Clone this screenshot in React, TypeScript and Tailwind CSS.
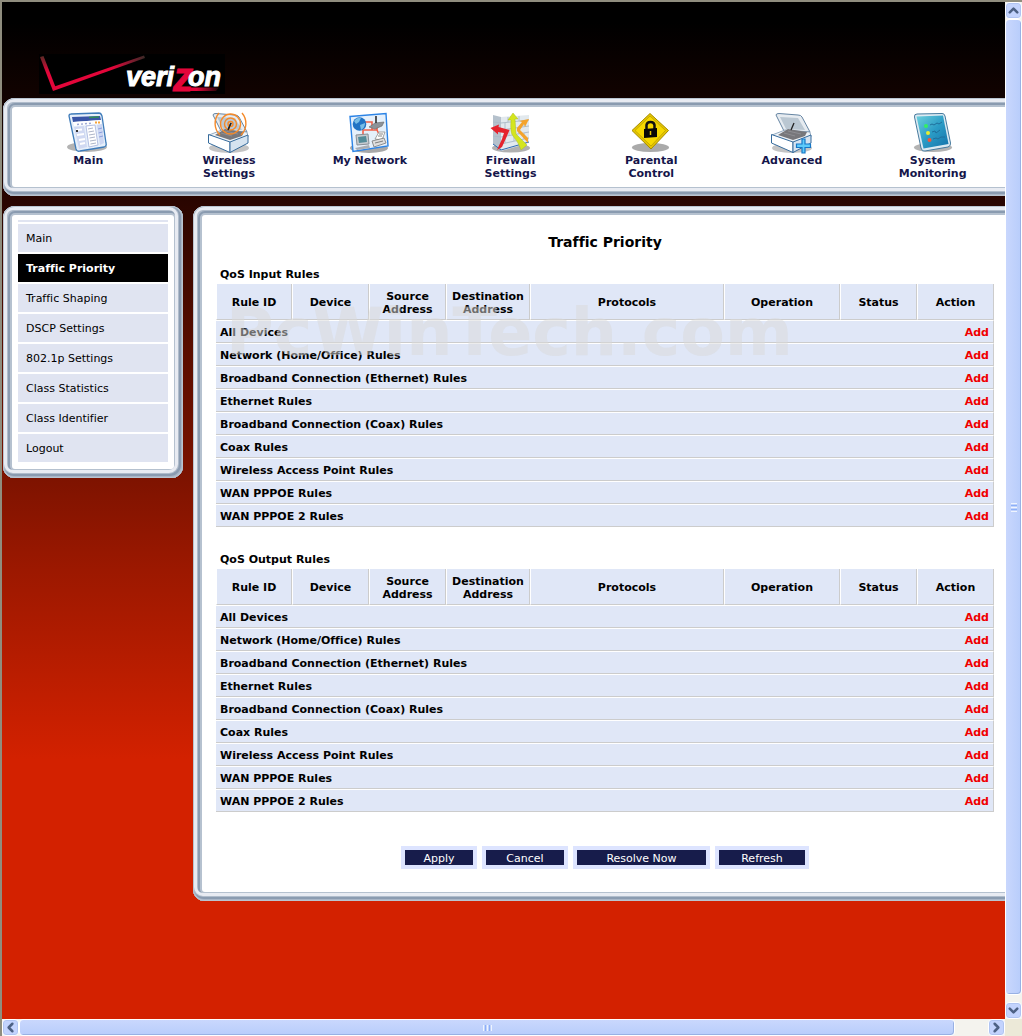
import type { ReactNode } from 'react'
import { ChevronDown, ChevronLeft, ChevronRight, ChevronUp } from 'lucide-react'
import clsx from 'clsx'

const RULES = [
  'All Devices',
  'Network (Home/Office) Rules',
  'Broadband Connection (Ethernet) Rules',
  'Ethernet Rules',
  'Broadband Connection (Coax) Rules',
  'Coax Rules',
  'Wireless Access Point Rules',
  'WAN PPPOE Rules',
  'WAN PPPOE 2 Rules',
]

const MENU = [
  'Main',
  'Traffic Priority',
  'Traffic Shaping',
  'DSCP Settings',
  '802.1p Settings',
  'Class Statistics',
  'Class Identifier',
  'Logout',
]

const COLUMNS = [
  { label: 'Rule ID', width: 'w-[76px]' },
  { label: 'Device', width: 'w-[77px]' },
  { label: 'Source Address', width: 'w-[77px]' },
  { label: 'Destination Address', width: 'w-[84px]' },
  { label: 'Protocols', width: '' },
  { label: 'Operation', width: 'w-[116px]' },
  { label: 'Status', width: 'w-[77px]' },
  { label: 'Action', width: 'w-[77px]' },
]

function Logo() {
  return (
    <svg width="186" height="40" viewBox="0 0 186 40" role="img" aria-label="verizon" className="block">
      <defs>
        <linearGradient id="checkShort" x1="0" y1="0" x2="0" y2="1">
          <stop offset="0" stopColor="#5a2a25" />
          <stop offset="0.45" stopColor="#e3063a" />
        </linearGradient>
        <linearGradient id="checkLong" x1="0" y1="0" x2="1" y2="0">
          <stop offset="0" stopColor="#e3063a" />
          <stop offset="0.65" stopColor="#e3063a" />
          <stop offset="1" stopColor="#3a2a26" />
        </linearGradient>
        <linearGradient id="zTail" x1="0" y1="0" x2="1" y2="0">
          <stop offset="0" stopColor="#e3063a" />
          <stop offset="0.5" stopColor="#e3063a" />
          <stop offset="1" stopColor="#1a0606" />
        </linearGradient>
      </defs>
      <rect width="186" height="40" fill="#000" />
      <path d="M1 3L4.500 2L16.500 33L14 37Z" fill="url(#checkShort)" />
      <path d="M14 37L15.500 32.500L105 1.500L106 4Z" fill="url(#checkLong)" />
      <path d="M138 33.500H180L177 37H135Z" fill="url(#zTail)" />
      <text fontFamily="'Liberation Sans', Arial, sans-serif" fontWeight="700" fontStyle="italic" fontSize="27" fill="#fff" stroke="#fff" strokeWidth="1">
        <tspan x="87" y="32">veri</tspan>
        <tspan x="134" y="37" fontSize="40" fill="#e3063a" stroke="#e3063a">z</tspan>
        <tspan x="149" y="32">on</tspan>
      </text>
    </svg>
  )
}

function Icon({ children }: { children: ReactNode }) {
  return (
    <svg width="42" height="42" viewBox="0 0 42 42" aria-hidden="true" className="block">
      {children}
    </svg>
  )
}

function MainIcon() {
  return (
    <Icon>
      <ellipse cx="20" cy="35" rx="20" ry="5" fill="#b3b3b3" />
      <path d="M4 2Q2 2 2 4L9 37Q10 40 13 39L37 35Q40 34 39 31L35 4Q34 1 32 1Z" fill="#e6effa" stroke="#3f7cba" strokeWidth="1.300" />
      <path d="M5 5L33 4L34 8L6 10Z" fill="#3a55a6" />
      <path d="M6 10L34 8L34.500 12L7 14Z" fill="#fff" />
      <path d="M22 5.500L32 5" stroke="#2f8c58" strokeWidth="1.500" />
      <path d="M10 12.500L26 11" stroke="#9daad6" strokeWidth="1.500" strokeDasharray="2 2" />
      <path d="M28 10.500H34" stroke="#f5a43a" strokeWidth="2" strokeDasharray="2 1" />
      <path d="M7 15L17 14L20 35L12 37Z" fill="#d0d9f2" />
      <path d="M19 14L28 13L31 33L22 35Z" fill="#fff" stroke="#a4b2dc" strokeWidth="0.800" />
      <path d="M30 13L35 12L37 31L33 33Z" fill="#ccd6f2" />
      <path d="M9 18L15 17.500M10 23L17 22M12 28L18 27M13 32L18 31" stroke="#fff" strokeWidth="2" />
      <path d="M9 19H11" stroke="#333" strokeWidth="2" />
      <path d="M21 17L26 16M21.500 20L27 19M22 23L28 22M22.500 26L28 25M23 29L29 28M23.500 32L29 31" stroke="#adb5c8" />
      <path d="M31 17L35 16M31.500 21L35.500 20M32 25L36 24" stroke="#8b9fdd" />
    </Icon>
  )
}

function RouterBox() {
  return (
    <>
      <ellipse cx="21" cy="36" rx="20" ry="5" fill="#c4c4c4" />
      <path d="M5 3Q5 1.500 8 1.500L27 3Q30 3 31 5L39 20L13 19Z" fill="#e6ebf0" stroke="#6685a3" />
      <path d="M9 5L27 6L34 18L15 17Z" fill="#bac7d2" />
      <path d="M1 23L14 18L39 20L40 25L22 31Z" fill="#eef2f6" stroke="#7c97b1" strokeWidth="0.800" />
      <path d="M7 23L17 17L36 20L34 24L22 28Z" fill="#77777b" />
      <path d="M13 21L24 24M17 19L30 22" stroke="#8d8d92" />
      <path d="M0.500 22.500L22 30V40.500L0.500 31Z" fill="#fff" stroke="#366b9c" />
      <path d="M22 30L40 23V31L22 40.500Z" fill="#d5e3f0" stroke="#366b9c" />
      <path d="M20 18L23 11" stroke="#222" strokeWidth="1.300" />
    </>
  )
}

function WirelessIcon() {
  return (
    <Icon>
      <RouterBox />
      <g fill="none" stroke="#f58a2a" strokeWidth="1.400">
        <circle cx="22.500" cy="12" r="2.500" />
        <circle cx="22.500" cy="12" r="6" />
        <circle cx="22.500" cy="12" r="10" />
        <path d="M11 1A16 16 0 0 0 12 23M34 1A16 16 0 0 1 33 23" />
      </g>
      <path d="M20 18L23 11" stroke="#222" strokeWidth="1.500" />
    </Icon>
  )
}

function NetworkIcon() {
  return (
    <Icon>
      <ellipse cx="20" cy="36" rx="19" ry="5" fill="#a8a8a8" />
      <path d="M1 4.500L37 1.500L39 34L4 39.500Z" fill="#e5f0fb" stroke="#2c84e6" strokeWidth="1.400" />
      <path d="M16 10L23 10V18H14V23M28 13V18L31 24M23 18L28 18" fill="none" stroke="#f0604a" strokeWidth="1.600" />
      <circle cx="10.500" cy="12" r="6.800" fill="#2173c4" />
      <path d="M5 9Q8 5 12 6L10 10L7 12ZM11 13L16 11Q16 16 12 18Z" fill="#79bde6" />
      <path d="M20 15L26 11L35 10L33 14L26 17Z" fill="#8c9299" stroke="#666" strokeWidth="0.600" />
      <path d="M27 11V4" stroke="#222" strokeWidth="1.500" />
      <path d="M7 23L19 22L20 32L8 33Z" fill="#c7cbd0" stroke="#888f96" />
      <path d="M9 25L17 24L18 30L10 31Z" fill="#548c99" />
      <path d="M6 36L20 33L21 36L8 38Z" fill="#a9adb3" />
      <path d="M26 27L30 20L36 20L33 28Z" fill="#fff" stroke="#8d8d8d" strokeWidth="0.800" />
      <path d="M23 29L35 26L37 31L25 35Z" fill="#dedede" stroke="#777" strokeWidth="0.800" />
      <path d="M29 24H33M30 22H34M26 31L34 29" stroke="#666" strokeWidth="0.800" />
    </Icon>
  )
}

function FirewallIcon() {
  return (
    <Icon>
      <ellipse cx="21" cy="36" rx="19" ry="4.500" fill="#b0b0b0" />
      <path d="M3 3L11 5V39L3 32Z" fill="#b5c1cc" />
      <path d="M11 5L39 3V31L11 39Z" fill="#e2e9ee" />
      <path d="M11 11L39 8M11 18L39 14M11 25L39 20M11 32L39 26M18 5V10M29 4V9M15 11V17M24 10V16M34 9V14M19 17V24M29 16V22M15 25V31M24 23V29M34 21V27M3 10L11 11M3 17L11 18M3 24L11 25" stroke="#aab9c6" strokeWidth="0.900" />
      <path d="M3 32L11 38L39 30" fill="none" stroke="#2e6ab0" />
      <path d="M0.500 16L9 12.500L8.500 15L19.500 18L17 24L12 35L7 38L12 27L14 21L8 20V22.500Z" fill="#e5232d" />
      <path d="M23 1L28 7H25L26 22L37 33L31 38Q29 31 23 24Q20 21 21 8H18Z" fill="#d4e51d" stroke="#a9bd25" strokeWidth="0.500" />
      <path d="M39 7L35 15L34 12L30 18L38 26V31L27 19V16L32 10L29 9Z" fill="#f4a32c" />
    </Icon>
  )
}

function ParentalIcon() {
  return (
    <Icon>
      <ellipse cx="20.500" cy="35.500" rx="18.500" ry="4.500" fill="#aaa" />
      <path d="M20 1.500L38.500 18.500L21 37L2 18.500Z" fill="#e6c500" stroke="#a48c00" />
      <path d="M20 4L35.500 18.500L21 34L5 18.500Z" fill="#f6d800" stroke="#b39b00" strokeWidth="0.700" />
      <path d="M16.500 18V13Q17 10 20.500 10Q24 10 24.500 13V18" fill="none" stroke="#111" strokeWidth="2.500" />
      <path d="M14 17L27 16V25L14 26Z" fill="#080808" />
      <path d="M20.500 19V23" stroke="#e6c500" strokeWidth="1.500" />
    </Icon>
  )
}

function AdvancedIcon() {
  return (
    <Icon>
      <RouterBox />
      <path d="M31 27H34V32H39.500V35.500H34V41H31V35.500H25.500V32H31Z" fill="#5fcbfa" stroke="#1677c7" strokeWidth="1.200" />
    </Icon>
  )
}

function MonitoringIcon() {
  return (
    <Icon>
      <ellipse cx="21" cy="35.500" rx="19" ry="4.500" fill="#b3b3b3" />
      <defs>
        <linearGradient id="screen" x1="0" y1="0" x2="1" y2="1">
          <stop offset="0" stopColor="#6dd0dd" />
          <stop offset="0.500" stopColor="#2b9cc6" />
          <stop offset="1" stopColor="#1472aa" />
        </linearGradient>
      </defs>
      <path d="M5 2Q2 2 2.500 5L9 36Q10 40 13 39L36 35Q39 34 38.500 31L33 4Q32 1 30 1.500Z" fill="#dceaf2" stroke="#467a9e" />
      <path d="M4.500 4.500L31 3.500L36.500 32L11.500 36.500Z" fill="url(#screen)" />
      <circle cx="14" cy="14" r="2" fill="#35ef62" />
      <circle cx="16" cy="21" r="2" fill="#e6ef2e" />
      <circle cx="17.500" cy="28" r="2" fill="#f0583c" />
      <path d="M18 13L20 12L22 13L25 11L27 12L30 10M20 20L23 19L24 21L28 18M21 27L24 26L26 27L29 25L33 25" fill="none" stroke="#1f6f9c" />
    </Icon>
  )
}

const NAV = [
  { label: 'Main', icon: <MainIcon /> },
  { label: 'Wireless Settings', icon: <WirelessIcon /> },
  { label: 'My Network', icon: <NetworkIcon /> },
  { label: 'Firewall Settings', icon: <FirewallIcon /> },
  { label: 'Parental Control', icon: <ParentalIcon /> },
  { label: 'Advanced', icon: <AdvancedIcon /> },
  { label: 'System Monitoring', icon: <MonitoringIcon /> },
]

// Bevelled silver frame, lit from the top left
function Panel({ className, children }: { className?: string; children: ReactNode }) {
  return (
    <div
      className={clsx(
        'rounded-xl bg-white p-[9px] shadow-[inset_0_0_0_1px_#b9c4d0,inset_-1px_-1px_0_1px_#a9b5c6,inset_-2px_-2px_0_2px_#8a9bb0,inset_-2px_-2px_0_3px_#b0bccb,inset_-2px_-2px_0_6px_#e8ebf2,inset_0_0_0_5px_#b0bccb,inset_0_0_0_7px_#8a9bb0,inset_0_0_0_9px_#b5c1cf]',
        className,
      )}
    >
      {children}
    </div>
  )
}

function RuleTable({ title }: { title: string }) {
  return (
    <section>
      <h2 className="h-5 pl-1 leading-[22px] font-bold">{title}</h2>
      <table className="w-full table-fixed border-separate border-spacing-0 font-bold">
        <thead>
          <tr className="h-9">
            {COLUMNS.map(c => (
              <th
                key={c.label}
                className={clsx('border-r border-b border-l border-r-[#ccc] border-b-[#ccc] border-l-white bg-[#e0e7f7] p-0 pt-0.5 leading-[13px]', c.width)}
              >
                {c.label}
              </th>
            ))}
          </tr>
        </thead>
        <tbody>
          {RULES.map(rule => (
            <tr key={rule} className="h-[23px]">
              <td colSpan={7} className="border-t border-b border-t-white border-b-[#ccc] bg-[#e0e7f7] p-0 pt-0.5 pl-1 leading-4">
                {rule}
              </td>
              <td className="border-t border-r border-b border-t-white border-r-[#ccc] border-b-[#ccc] bg-[#e0e7f7] p-0 pt-0.5 pr-1 text-right leading-4">
                <a href="#add" className="text-[#f00000]">Add</a>
              </td>
            </tr>
          ))}
        </tbody>
      </table>
    </section>
  )
}

function ActionButton({ className, children }: { className: string; children: ReactNode }) {
  return (
    <button type="button" className={clsx('h-[23px] border-4 border-[#dde4ff] bg-[#171c4b] pt-0.5 leading-[13px] text-white', className)}>
      {children}
    </button>
  )
}

function ScrollButton({ label, children }: { label: string; children: ReactNode }) {
  return (
    <button
      type="button"
      aria-label={label}
      className="flex size-[17px] shrink-0 items-center justify-center rounded-sm border border-white bg-[#c3d3fd] text-[#4d6185] shadow-[inset_0_0_0_1px_#b0c4f2]"
    >
      {children}
    </button>
  )
}

export default function App() {
  return (
    <div className="grid min-h-screen grid-cols-[minmax(0,1fr)_17px] grid-rows-[1fr_17px] border-t-2 border-l-2 border-t-[#8f8d7e] border-l-[#8f8d7e] bg-[#ece9d8] font-['DejaVu_Sans',Verdana,sans-serif] text-[11px] text-black [font-variant-ligatures:none]">
      <div className="overflow-hidden bg-[linear-gradient(to_bottom,#000_0px,#000_20px,#2a0500_200px,#590d00_345px,#721100_440px,#9c1800_568px,#d32100_758px)] pl-px">
        <header className="pt-[52px] pb-1 pl-9">
          <Logo />
        </header>

        <Panel className="-mr-5">
          <nav className="flex h-20 pt-[5px] pr-[13px] pl-1.5">
            {NAV.map(({ label, icon }) => (
              <a key={label} href="#nav" className="flex flex-1 flex-col items-center text-center leading-[13px] font-bold text-[#15154a]">
                {icon}
                <span className="max-w-20">{label}</span>
              </a>
            ))}
          </nav>
        </Panel>

        <div className="mt-2.5 -mr-5 flex items-start gap-2.5">
          <Panel className="w-[180px] shrink-0">
            <nav className="px-1.5 pt-[5px] pb-[7px]">
              <div className="mb-0.5 h-0.5 bg-[#e0e4f1]" />
              <ul className="flex flex-col gap-0.5">
                {MENU.map(item => (
                  <li key={item}>
                    <a
                      href="#menu"
                      className={clsx(
                        'block h-7 pl-2 leading-[30px]',
                        item === 'Traffic Priority' ? 'bg-black font-bold text-white' : 'bg-[#e0e4f1]',
                      )}
                    >
                      {item}
                    </a>
                  </li>
                ))}
              </ul>
            </nav>
          </Panel>

          <Panel className="min-w-0 flex-1">
            <main className="relative pt-[17px] pr-[22px] pb-[23px] pl-3.5">
              <h1 className="mb-3 text-center text-sm leading-5 font-bold">Traffic Priority</h1>
              <div className="flex flex-col gap-[22px]">
                <RuleTable title="QoS Input Rules" />
                <RuleTable title="QoS Output Rules" />
              </div>
              <div className="mt-[34px] flex justify-center gap-[5px]">
                <ActionButton className="w-[76px]">Apply</ActionButton>
                <ActionButton className="w-[86px]">Cancel</ActionButton>
                <ActionButton className="w-[137px]">Resolve Now</ActionButton>
                <ActionButton className="w-[94px]">Refresh</ActionButton>
              </div>
              <div className="pointer-events-none absolute top-[82px] left-6 text-[65px] leading-[72px] font-bold text-[#dadada]/50 select-none">
                PcWinTech.com
              </div>
            </main>
          </Panel>
        </div>
      </div>

      {/* Vertical scroll bar */}
      <div className="flex flex-col bg-[#f4f3ee]">
        <ScrollButton label="Scroll up"><ChevronUp size={15} strokeWidth={4} /></ScrollButton>
        <div className="mb-[7px] flex flex-1 flex-col items-center justify-center gap-px rounded-sm border border-white bg-linear-to-r from-[#c9d7fd] to-[#b8cdfb] shadow-[inset_-1px_-1px_0_0_#98b1e4]">
          <span className="h-px w-1.5 bg-[#eef4fe]" />
          <span className="h-px w-1.5 bg-[#8cb0f8]" />
          <span className="h-px w-1.5 bg-[#eef4fe]" />
          <span className="h-px w-1.5 bg-[#8cb0f8]" />
          <span className="h-px w-1.5 bg-[#eef4fe]" />
        </div>
        <ScrollButton label="Scroll down"><ChevronDown size={15} strokeWidth={4} /></ScrollButton>
      </div>

      {/* Horizontal scroll bar */}
      <div className="flex bg-[#f4f3ee]">
        <ScrollButton label="Scroll left"><ChevronLeft size={15} strokeWidth={4} /></ScrollButton>
        <div className="mr-[33px] flex flex-1 items-center justify-center gap-px rounded-sm border border-white bg-linear-to-b from-[#c9d7fd] to-[#b8cdfb] shadow-[inset_-1px_-1px_0_0_#98b1e4]">
          <span className="h-1.5 w-px bg-[#eef4fe]" />
          <span className="h-1.5 w-px bg-[#8cb0f8]" />
          <span className="h-1.5 w-px bg-[#eef4fe]" />
          <span className="h-1.5 w-px bg-[#8cb0f8]" />
          <span className="h-1.5 w-px bg-[#eef4fe]" />
        </div>
        <ScrollButton label="Scroll right"><ChevronRight size={15} strokeWidth={4} /></ScrollButton>
      </div>
    </div>
  )
}
